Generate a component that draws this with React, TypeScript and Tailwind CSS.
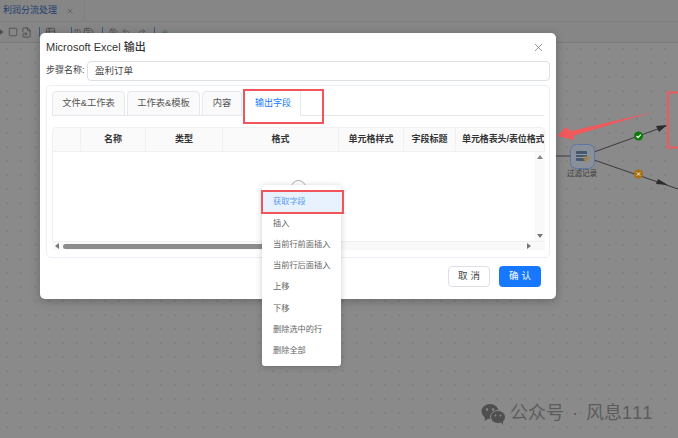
import React from 'react';
import { X, Square, Play, FileSymlink, Table2, Columns2, Save, Undo2, Redo2, Lock } from 'lucide-react';

const font = { fontFamily: '"Liberation Sans", "Noto Sans CJK SC", sans-serif' };

const tabs = [
  { label: '文件&工作表', w: 'w-[73px]' },
  { label: '工作表&模板', w: 'w-[73px]' },
  { label: '内容', w: 'w-[40px]' },
];

const columns = [
  { label: '', w: 'w-[28px]' },
  { label: '名称', w: 'w-[65px]' },
  { label: '类型', w: 'w-[77px]' },
  { label: '格式', w: 'w-[116px]' },
  { label: '单元格样式', w: 'w-[65px]' },
  { label: '字段标题', w: 'w-[52px]' },
];

const menuItems = ['插入', '当前行前面插入', '当前行后面插入', '上移', '下移', '删除选中的行', '删除全部'];

function Toolbar() {
  return (
    <div className="h-[21px] flex items-center text-[#4d4d4d] border-b border-[#7c7c7c]">
      <Play className="w-[8px] h-[8px] -ml-[4px]" fill="currentColor" />
      <Square className="w-[10px] h-[10px] ml-[4px]" />
      <FileSymlink className="w-[11px] h-[11px] ml-[3px]" />
      <div className="w-px h-[10px] bg-[#3f5a80] ml-[7px]" />
      <Table2 className="w-[11px] h-[11px] ml-[5px]" />
      <div className="w-px h-[10px] bg-[#3f5a80] ml-[15px]" />
      <Columns2 className="w-[7px] h-[9px] ml-[2px]" />
      <Save className="w-[11px] h-[11px] ml-[2px]" />
      <div className="w-px h-[10px] bg-[#3f5a80] ml-[8px]" />
      <Save className="w-[9px] h-[9px] ml-[6px]" />
      <Undo2 className="w-[8px] h-[8px] ml-[4px]" />
      <Redo2 className="w-[8px] h-[8px] ml-[8px]" />
      <div className="w-px h-[10px] bg-[#3f5a80] ml-[8px]" />
      <Lock className="w-[6px] h-[9px] ml-[7px] text-[#3d6b3d]" />
    </div>
  );
}

function Canvas() {
  return (
    <svg className="absolute left-0 top-0" width="678" height="438" viewBox="0 0 678 438">
      <line x1="556" y1="156" x2="570" y2="156" stroke="#3a3a3a" />
      <line x1="594" y1="152" x2="666" y2="126" stroke="#3a3a3a" />
      <path d="M667 125 L656 126 L659 132 Z" fill="#2c2c2c" />
      <line x1="594" y1="160" x2="678" y2="189" stroke="#3a3a3a" />
      <path d="M668 185 L658 179 L656 184 Z" fill="#2c2c2c" />
      <circle cx="638.5" cy="136" r="4.5" fill="#0d7a0d" />
      <path d="M636.5 136 L638 137.6 L640.8 134.6" stroke="#fff" strokeWidth="1.2" fill="none" />
      <circle cx="638.5" cy="174" r="4.5" fill="#a8700e" />
      <path d="M636.8 172.3 L640.2 175.7 M640.2 172.3 L636.8 175.7" stroke="#eee" strokeWidth="1" />
      <rect x="570.5" y="144.5" width="24" height="24" rx="6" fill="#8a9099" stroke="#5a76a6" strokeWidth="1" />
      <rect x="576" y="151" width="11" height="10" rx="1" fill="#46586b" />
      <path d="M576 154.5 H587 M576 157.5 H587" stroke="#a2abb5" strokeWidth="0.8" />
      <path d="M583 157 H589.5 L586.2 162.5 Z" fill="#8f8468" stroke="#b08a3a" strokeWidth="0.9" />
      <rect x="668" y="92.5" width="14" height="55" fill="none" stroke="#ee5a5c" strokeWidth="2" />
      <path d="M557 136 L566 127 L571 131 L653 112 L574 135.5 L574 140 Z" fill="#f15a5c" />
    </svg>
  );
}

function Dialog() {
  return (
    <div className="absolute left-[40px] top-[33px] w-[516px] h-[266px] bg-white rounded-[5px] shadow-[0_2px_10px_rgba(0,0,0,0.25)] px-[6px] pt-[6px] flex flex-col">
      <div className="h-[16px] flex items-center justify-between text-[11px] font-medium text-[#333]">
        <span>Microsoft Excel 输出</span>
        <X className="w-[13px] h-[13px] text-[#777] mr-[5px]" strokeWidth={1.4} />
      </div>
      <div className="flex items-center mt-[6px] h-[20px]">
        <span className="w-[41px] text-[9px] text-[#444]">步骤名称:</span>
        <div className="flex-1 h-[20px] border border-[#dcdfe6] rounded-[4px] pl-[7px] flex items-center text-[9.5px] text-[#444]">盈利订单</div>
      </div>
      <div className="mt-[4px] w-[504px] h-[173px] border border-[#ebeef5] rounded-[5px] px-[5px] pt-[5px]">
        <div className="flex gap-[2px] h-[25px] border-b border-[#e4e7ed]">
          {tabs.map(t => (
            <div key={t.label} className={`${t.w} h-[25px] border border-[#e4e7ed] rounded-t-[4px] bg-[#fafafa] flex items-center justify-center text-[9.3px] text-[#555]`}>
              {t.label}
            </div>
          ))}
          <div className="w-[59px] h-[25px] -ml-[2px] bg-white border-r border-[#e4e7ed] pl-[13px] flex items-center text-[9px] text-[#1677ff]">输出字段</div>
        </div>
        <div className="mt-[11px] w-[493px]">
          <div className="flex h-[25px] bg-[#fafafa] border border-[#f0f0f0] rounded-t-[4px] overflow-hidden">
            {columns.map((c, i) => (
              <div key={i} className={`${c.w} shrink-0 border-r border-[#f0f0f0] flex items-center justify-center text-[9px] font-semibold text-[#333] whitespace-nowrap`}>
                {c.label}
              </div>
            ))}
            <div className="flex-1 pl-[6px] flex items-center text-[9px] font-semibold text-[#333] whitespace-nowrap tracking-[-0.1px]">单元格表头/表位格式</div>
          </div>
          <div className="flex h-[89px] border-l border-[#f0f0f0]">
            <div className="flex-1" />
            <div className="w-[10px] bg-[#f9f9f9] flex flex-col items-center justify-between py-[3px]">
              <span className="w-0 h-0 border-x-[3px] border-x-transparent border-b-[4px] border-b-[#888]" />
              <span className="w-0 h-0 border-x-[3px] border-x-transparent border-t-[4px] border-t-[#777]" />
            </div>
          </div>
          <div className="h-[9px] bg-[#f9f9f9] border-t border-[#f0f0f0] flex items-center px-[3px] gap-[4px]">
            <span className="w-0 h-0 border-y-[3px] border-y-transparent border-r-[4px] border-r-[#777]" />
            <div className="w-[225px] h-[5px] rounded-full bg-[#8c8c8c]" />
            <div className="flex-1" />
            <span className="w-0 h-0 border-y-[3px] border-y-transparent border-l-[4px] border-l-[#777] mr-[11px]" />
          </div>
        </div>
      </div>
      <div className="flex justify-end gap-[9px] mt-[8px] pr-[9px]">
        <div className="w-[42px] h-[21px] border border-[#dcdfe6] rounded-[4px] flex items-center justify-center text-[9.5px] text-[#444] tracking-[3px] pl-[3px]">取消</div>
        <div className="w-[42px] h-[21px] bg-[#1677ff] rounded-[4px] flex items-center justify-center text-[9.5px] text-white tracking-[3px] pl-[3px]">确认</div>
      </div>
    </div>
  );
}

function ContextMenu() {
  return (
    <div className="absolute left-[262px] top-[185px] w-[79px] h-[181px] bg-white rounded-[3px] shadow-[0_1px_6px_rgba(0,0,0,0.2)] pt-[6px]">
      <div className="h-[22px] bg-[#e8f2ff] flex items-center pl-[11px] text-[8.2px] text-[#5a9bf0]">获取字段</div>
      {menuItems.map(m => (
        <div key={m} className="h-[21.3px] flex items-center pl-[11px] text-[8.2px] text-[#666] whitespace-nowrap">{m}</div>
      ))}
    </div>
  );
}

export default function App() {
  return (
    <div style={font} className="relative w-[678px] h-[438px] overflow-hidden bg-[#8a8a8a] bg-[radial-gradient(#777_0.6px,transparent_0.8px)] bg-[size:14px_14px]">
      {/* Top bars behind the mask */}
      <div className="relative bg-[#868686]">
        <div className="h-[22px] flex items-center border-b border-[#7f7f7f]">
          <div className="w-[85px] h-full flex items-center border-r border-[#7f7f7f] overflow-hidden">
            <span className="text-[9px] text-[#1f3d70] whitespace-nowrap ml-[3px]">利润分流处理</span>
            <X className="w-[8px] h-[8px] ml-[9px] text-[#555] shrink-0" />
          </div>
        </div>
        <Toolbar />
      </div>

      <Canvas />
      <span className="absolute left-[567px] top-[168px] text-[7.5px] text-[#3a3a3a]">过滤记录</span>

      <Dialog />

      {/* Loading spinner sits just above the menu */}
      <div className="absolute left-[291px] top-[180px] w-[15px] h-[15px] rounded-full border border-[#aaa]" />
      <ContextMenu />

      {/* Annotation boxes */}
      <div className="absolute left-[243px] top-[89px] w-[81px] h-[35px] border-2 border-[#f2545b]" />
      <div className="absolute left-[261px] top-[190px] w-[83px] h-[24px] border-2 border-[#f2545b]" />

      {/* Watermark */}
      <div className="absolute left-[481px] top-[400px] flex items-center gap-[4px] text-[#5c5c5c]">
        <svg width="25" height="22" viewBox="0 0 25 22">
          <ellipse cx="9" cy="8.5" rx="8.5" ry="7.5" fill="#4f4f4f" />
          <path d="M4 13 L3.5 18 L8 15 Z" fill="#4f4f4f" />
          <ellipse cx="17" cy="14" rx="7.5" ry="6.5" fill="#4f4f4f" stroke="#8a8a8a" strokeWidth="1" />
          <path d="M20 19 L22 22 L22 17 Z" fill="#4f4f4f" />
          <circle cx="6" cy="6.5" r="1.2" fill="#8a8a8a" />
          <circle cx="12" cy="6.5" r="1.2" fill="#8a8a8a" />
          <circle cx="14.5" cy="12.5" r="1" fill="#8a8a8a" />
          <circle cx="19.5" cy="12.5" r="1" fill="#8a8a8a" />
        </svg>
        <span className="text-[18px] whitespace-nowrap">公众号<span className="mx-[8px]">·</span>风息<span className="tracking-[1.5px]">111</span></span>
      </div>
    </div>
  );
}
